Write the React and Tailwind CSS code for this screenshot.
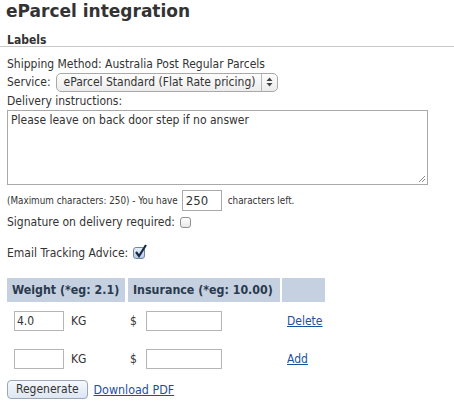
export default function App() {
  const f = { fontFamily: '"DejaVu Sans Condensed", "DejaVu Sans", sans-serif' };
  return (
    <div className="w-[454px] h-[417px] bg-white text-[#333] overflow-hidden" style={f}>
      <h1 className="text-[17px] font-bold leading-[20px] pl-[6px] pt-[1px] text-[#333] font-['DejaVu_Sans',sans-serif]">eParcel integration</h1>
      <div className="mt-[13px] pl-[7px] border-b border-[#c8c8c8] text-[12px] font-bold leading-[12px]">Labels</div>
      <div className="pl-[7px] text-[12px] leading-[16px]">
        <div className="mt-[9px]">Shipping Method: Australia Post Regular Parcels</div>
        <div className="flex items-center mt-[1px] h-[18px]">
          <span>Service:</span>
          <div className="ml-[5px] flex items-center h-[19px] w-[222px] rounded-[5px] border border-[#a9a9a9] bg-gradient-to-b from-[#fdfdfd] to-[#ececec]">
            <span className="flex-1 pl-[7px]">eParcel Standard (Flat Rate pricing)</span>
            <span className="w-[16px] h-full border-l border-[#b5b5b5] flex items-center justify-center">
              <svg width="7" height="10" viewBox="0 0 7 10"><path d="M3.5 0.5 L6.5 4 L0.5 4 Z M0.5 6 L6.5 6 L3.5 9.5 Z" fill="#444"/></svg>
            </span>
          </div>
        </div>
        <div className="mt-[2px]">Delivery instructions:</div>
        <div className="mt-[1px] w-[421px] h-[75px] border border-[#a9a9a9] px-[3px] py-[2px] relative">
          <div className="leading-[15px]">Please leave on back door step if no answer</div>
          <svg className="absolute right-[1px] bottom-[1px]" width="8" height="8" viewBox="0 0 8 8"><path d="M7 1 L1 7 M7 4 L4 7" stroke="#888" strokeWidth="1"/></svg>
        </div>
        <div className="flex items-center mt-[5px] h-[21px]">
          <span className="text-[9.8px]">(Maximum characters: 250) - You have</span>
          <span className="ml-[4px] w-[40px] h-[21px] border border-[#a9a9a9] text-[13px] leading-[19px] pl-[3px]">250</span>
          <span className="ml-[6px] text-[9.8px]">characters left.</span>
        </div>
        <div className="flex items-center mt-[3px] h-[16px]">
          <span>Signature on delivery required:</span>
          <span className="ml-[5px] w-[11px] h-[11px] rounded-[3px] border border-[#8f8f8f] bg-gradient-to-b from-white to-[#e8e8e8]"></span>
        </div>
        <div className="flex items-center mt-[15px] h-[16px]">
          <span>Email Tracking Advice:</span>
          <span className="ml-[5px] w-[12px] h-[12px] rounded-[3px] border border-[#6f86a6] bg-gradient-to-b from-[#e6eefa] to-[#b8cbe6] relative">
            <svg className="absolute left-[0px] top-[-4px]" width="14" height="15" viewBox="0 0 14 15"><path d="M2 8 L5 12 L12 1" stroke="#1a2a44" strokeWidth="2.2" fill="none"/></svg>
          </span>
        </div>
        <table className="mt-[17px] border-separate border-spacing-0 text-[12.3px]">
          <thead>
            <tr className="h-[24px]">
              <th className="w-[118px] bg-[#c5d1e1] text-[#2a3a4c] font-bold text-left pl-[5px]">Weight (*eg: 2.1)</th>
              <th className="w-[155px] bg-[#c5d1e1] text-[#2a3a4c] font-bold text-left pl-[5px] border-l-[3px] border-white">Insurance (*eg: 10.00)</th>
              <th className="w-[45px] bg-[#c5d1e1] border-l-[2px] border-white"></th>
            </tr>
          </thead>
          <tbody className="text-[12px]">
            {[{ v: "4.0", l: "Delete" }, { v: "", l: "Add" }].map((r, i) => (
              <tr key={i} className="h-[38px]">
                <td className="pl-[7px]">
                  <div className="flex items-center">
                    <span className="w-[50px] h-[20px] border border-[#b5b5b5] text-[12px] leading-[18px] pl-[2px]">{r.v}</span>
                    <span className="ml-[7px]">KG</span>
                  </div>
                </td>
                <td className="pl-[5px]">
                  <div className="flex items-center">
                    <span>$</span>
                    <span className="ml-[9px] w-[76px] h-[20px] border border-[#b5b5b5]"></span>
                  </div>
                </td>
                <td className="pl-[7px]">
                  <a className="text-[#1d4f9a] underline">{r.l}</a>
                </td>
              </tr>
            ))}
          </tbody>
        </table>
        <div className="flex items-center mt-[2px]">
          <span className="h-[19px] px-[8px] rounded-[4px] border border-[#9aa7b8] bg-gradient-to-b from-[#f6f9fd] to-[#dde6f1] leading-[17px]">Regenerate</span>
          <a className="ml-[6px] text-[#1d4f9a] underline text-[12.4px]">Download PDF</a>
        </div>
      </div>
    </div>
  );
}
